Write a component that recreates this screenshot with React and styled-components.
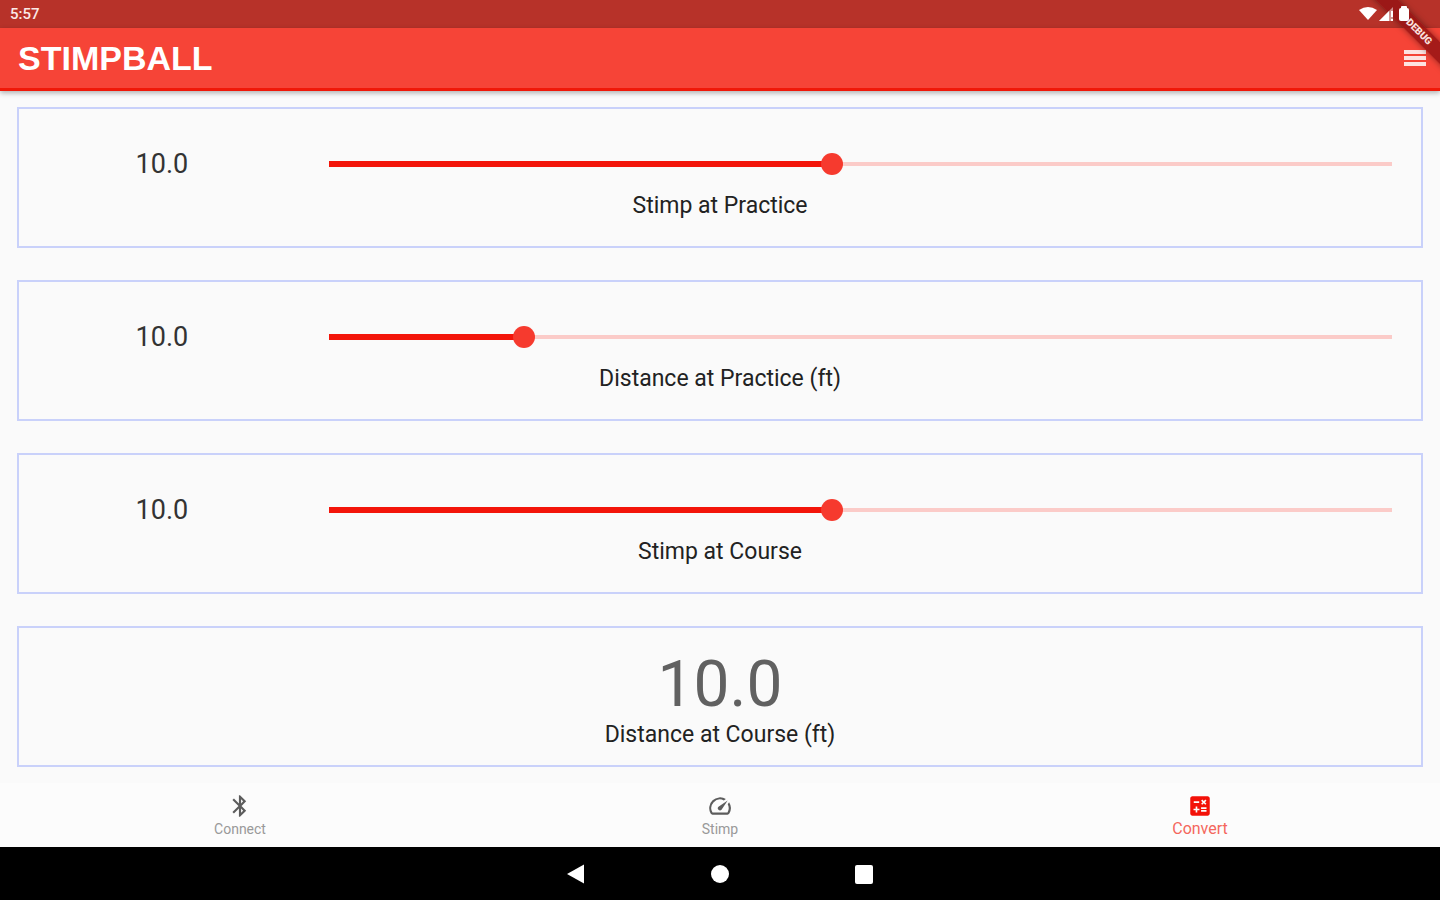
import { useState } from 'react';
import styled, { createGlobalStyle } from 'styled-components';
import { MdBluetooth, MdCalculate, MdSpeed } from 'react-icons/md';

const fields = [
    { id: 'stimp-practice', label: 'Stimp at Practice', min: 1, max: 20 },
    { id: 'distance-practice', label: 'Distance at Practice (ft)', min: 1, max: 50 },
    { id: 'stimp-course', label: 'Stimp at Course', min: 1, max: 20 },
];

const tabs = [
    { name: 'Connect', Icon: MdBluetooth },
    { name: 'Stimp', Icon: MdSpeed },
    { name: 'Convert', Icon: MdCalculate },
];

export default function App() {
    const [values, setValues] = useState([10, 10, 10]);
    const [activeTab, setActiveTab] = useState('Convert');

    const [stimpPractice, distancePractice, stimpCourse] = values;
    const distanceCourse = (distancePractice * stimpCourse) / stimpPractice;

    function changeValue(index, value) {
        setValues(values.map((v, i) => (i === index ? value : v)));
    }

    return (
        <Screen>
            <GlobalStyle />
            <StatusBar>
                <span>5:57</span>
                <StatusIcons />
            </StatusBar>
            <AppBar>
                <h1>STIMPBALL</h1>
                <MenuButton type="button" aria-label="Menu">
                    <svg viewBox="0 0 22 16">
                        <path d="M0 0h22v4H0zM0 6h22v4H0zM0 12h22v4H0z" />
                    </svg>
                </MenuButton>
            </AppBar>
            <Content>
                {fields.map((field, index) => (
                    <SliderCard
                        key={field.id}
                        {...field}
                        value={values[index]}
                        onChange={(value) => changeValue(index, value)}
                    />
                ))}
                <Card>
                    <Result>{distanceCourse.toFixed(1)}</Result>
                    <Caption>Distance at Course (ft)</Caption>
                </Card>
            </Content>
            <TabBar>
                {tabs.map(({ name, Icon }) => (
                    <Tab
                        key={name}
                        type="button"
                        $active={name === activeTab}
                        onClick={() => setActiveTab(name)}
                    >
                        <Icon />
                        <span>{name}</span>
                    </Tab>
                ))}
            </TabBar>
            <SystemBar>
                <button type="button" aria-label="Back">
                    <svg viewBox="0 0 20 20"><path d="M1 10 18 0.5V19.5Z" /></svg>
                </button>
                <button type="button" aria-label="Home">
                    <svg viewBox="0 0 20 20"><circle cx="10" cy="10" r="9" /></svg>
                </button>
                <button type="button" aria-label="Recent apps">
                    <svg viewBox="0 0 20 20"><rect x="1" y="1" width="18" height="19" rx="2" /></svg>
                </button>
            </SystemBar>
            <BannerCorner>
                <Banner>DEBUG</Banner>
            </BannerCorner>
        </Screen>
    );
}

function SliderCard({ id, label, min, max, value, onChange }) {
    const fill = (value - min) / (max - min);

    return (
        <Card>
            <SliderRow>
                <output htmlFor={id}>{value.toFixed(1)}</output>
                <Slider
                    id={id}
                    type="range"
                    min={min}
                    max={max}
                    step="0.1"
                    value={value}
                    style={{ '--fill': fill }}
                    onChange={(e) => onChange(Number(e.target.value))}
                />
            </SliderRow>
            <Caption as="label" htmlFor={id}>{label}</Caption>
        </Card>
    );
}

function StatusIcons() {
    return (
        <svg width="56" height="18" viewBox="0 0 56 18" fill="#fff" aria-hidden="true">
            <path d="M0 5Q9-1 18 5L9 15Z" />
            <path d="M20 16 34 2V16Z" fillOpacity="0.5" />
            <path d="M20 16 30 6V16ZM32 6h2v6h-2zM32 14h2v2h-2z" />
            <rect x="40" y="3" width="10" height="13" rx="2" />
            <rect x="42" y="1" width="6" height="4" rx="1" />
        </svg>
    );
}

const GlobalStyle = createGlobalStyle`
    * {
        box-sizing: border-box;
    }

    body {
        margin: 0;
        background: #fafafa;
        font-family: Roboto, "Liberation Sans", sans-serif;
    }

    button {
        border: 0;
        padding: 0;
        background: none;
        font: inherit;
        cursor: pointer;
    }
`;

const Screen = styled.div`
    position: relative;
    min-height: 100vh;
    display: flex;
    flex-direction: column;
    overflow: hidden;
`;

const StatusBar = styled.div`
    display: flex;
    align-items: center;
    justify-content: space-between;
    height: 28px;
    padding: 0 25px 0 10px;
    background: #b73229;
    color: #fbe9e7;
    font-size: 15px;
    font-weight: 500;

    svg {
        position: relative;
        z-index: 2;
    }
`;

const AppBar = styled.header`
    display: flex;
    align-items: center;
    justify-content: space-between;
    height: 63px;
    padding: 0 14px 0 18px;
    background: #f64437;
    border-bottom: 3px solid #f01808;
    box-shadow: 0 2px 5px rgba(0, 0, 0, 0.3);
    color: #fff;

    h1 {
        margin: 0;
        font-family: "Liberation Sans", Arial, sans-serif;
        font-size: 34px;
        font-weight: 700;
    }
`;

const MenuButton = styled.button`
    display: flex;

    svg {
        width: 22px;
        height: 16px;
        fill: #fde3e1;
    }
`;

const Content = styled.main`
    flex: 1;
    display: grid;
    grid-auto-rows: 1fr;
    gap: 32px;
    padding: 16px 17px;
`;

const Card = styled.section`
    display: flex;
    flex-direction: column;
    align-items: center;
    justify-content: center;
    border: 2px solid #c9d1fa;
`;

const SliderRow = styled.div`
    display: grid;
    grid-template-columns: 1fr 4fr;
    align-items: center;
    width: 100%;
    height: 56px;
    padding-right: 18px;

    output {
        padding-left: 9px;
        text-align: center;
        font-size: 27px;
        color: #333;
    }
`;

const Slider = styled.input`
    appearance: none;
    height: 22px;
    margin: 0 0 0 22px;
    background:
        linear-gradient(#f3150a, #f3150a) 11px center / calc((100% - 22px) * var(--fill)) 6px no-repeat,
        linear-gradient(#fbcbc8, #fbcbc8) 11px center / calc(100% - 22px) 4px no-repeat;
    cursor: pointer;

    &::-webkit-slider-thumb {
        appearance: none;
        width: 22px;
        height: 22px;
        border-radius: 50%;
        background: #f63a2e;
    }
`;

const Caption = styled.span`
    font-size: 23px;
    line-height: 28px;
    color: #222;
`;

const Result = styled.output`
    padding-top: 4px;
    font-size: 64px;
    line-height: 72px;
    color: #616161;
`;

const TabBar = styled.nav`
    display: flex;
    height: 64px;
    padding-top: 2px;
    background: #fcfcfc;
`;

const Tab = styled.button`
    flex: 1;
    display: flex;
    flex-direction: column;
    align-items: center;
    justify-content: center;
    color: ${({ $active }) => ($active ? '#f4675d' : '#999')};
    font-size: ${({ $active }) => ($active ? 16 : 14)}px;
    line-height: 20px;

    svg {
        width: 26px;
        height: 26px;
        color: ${({ $active }) => ($active ? '#f31108' : '#5c5c5c')};
    }
`;

const SystemBar = styled.footer`
    display: flex;
    align-items: center;
    justify-content: center;
    gap: 124px;
    height: 53px;
    background: #000;

    button {
        display: flex;
    }

    svg {
        width: 20px;
        height: 20px;
        fill: #fff;
    }
`;

const BannerCorner = styled.div`
    position: absolute;
    top: 0;
    right: 0;
    z-index: 1;
    width: 80px;
    height: 80px;
    overflow: hidden;
    pointer-events: none;
`;

const Banner = styled.div`
    position: absolute;
    top: 24px;
    right: -39px;
    width: 120px;
    transform: rotate(45deg);
    background: rgba(150, 20, 20, 0.85);
    box-shadow: 0 0 6px rgba(0, 0, 0, 0.4);
    color: #fbe0de;
    text-align: center;
    font-size: 10px;
    font-weight: 900;
    line-height: 16px;
`;
